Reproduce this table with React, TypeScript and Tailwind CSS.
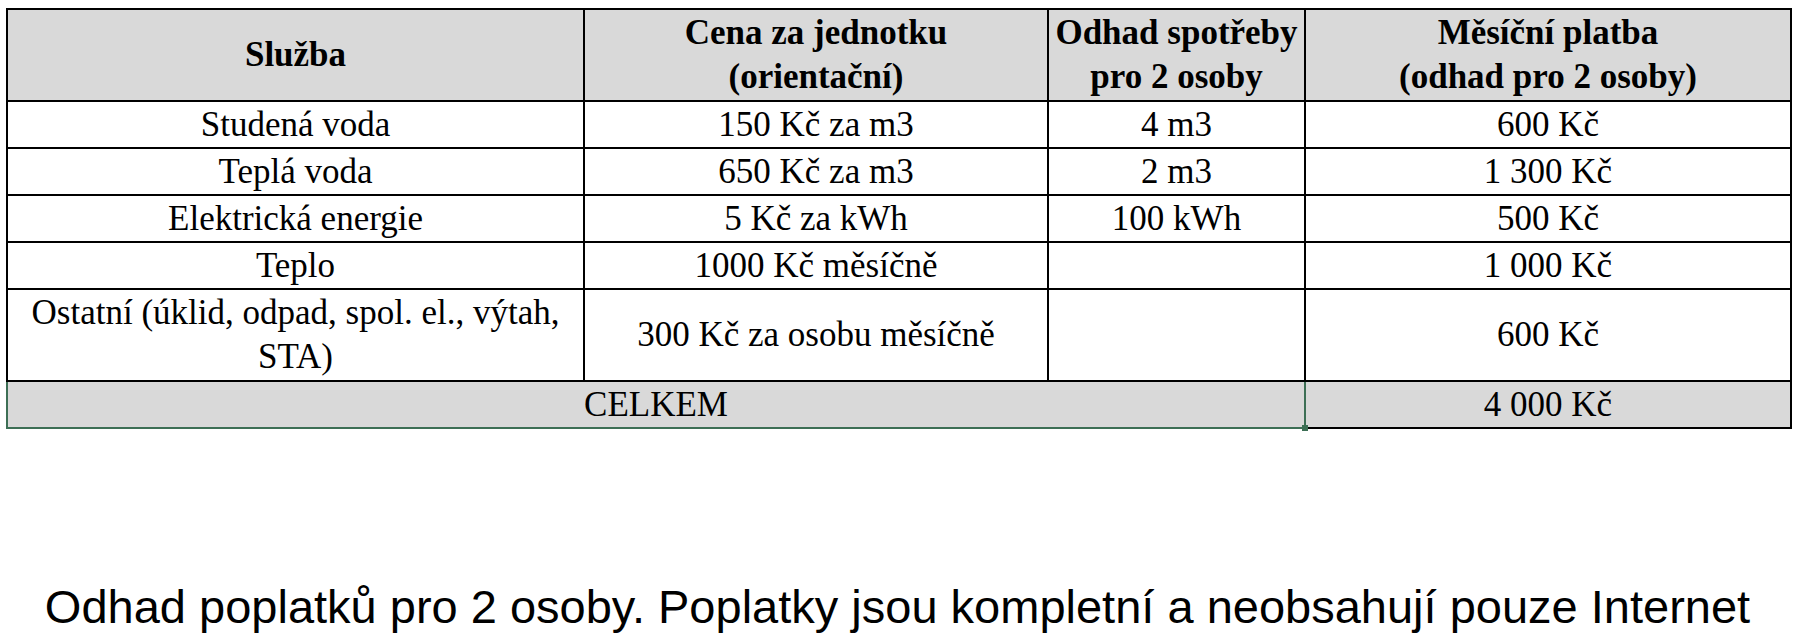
const ROWS = [
  { sluzba: ["Studená voda"], cena: "150 Kč za m3", odhad: "4 m3", platba: "600 Kč", h: "h-[47px]" },
  { sluzba: ["Teplá voda"], cena: "650 Kč za m3", odhad: "2 m3", platba: "1 300 Kč", h: "h-[47px]" },
  { sluzba: ["Elektrická energie"], cena: "5 Kč za kWh", odhad: "100 kWh", platba: "500 Kč", h: "h-[47px]" },
  { sluzba: ["Teplo"], cena: "1000 Kč měsíčně", odhad: "", platba: "1 000 Kč", h: "h-[47px]" },
  {
    sluzba: ["Ostatní (úklid, odpad, spol. el., výtah,", "STA)"],
    cena: "300 Kč za osobu měsíčně",
    odhad: "",
    platba: "600 Kč",
    h: "h-[92px]",
  },
];

const cell = "border-2 border-black text-center align-middle p-0";

export default function App() {
  return (
    <div className="w-[1795px] h-[640px] bg-white flex flex-col">
      <div className="pt-[8px] pl-[6px]">
        <table
          className="border-collapse table-fixed text-black text-[35px] leading-[40px]"
          style={{ fontFamily: '"Liberation Serif", "Times New Roman", serif' }}
        >
          <colgroup>
            <col className="w-[577px]" />
            <col className="w-[464px]" />
            <col className="w-[257px]" />
            <col className="w-[486px]" />
          </colgroup>
          <thead>
            <tr className="h-[92px] bg-[#d9d9d9] font-bold leading-[44px]">
              <th className={cell}>Služba</th>
              <th className={cell}>
                Cena za jednotku
                <br />
                (orientační)
              </th>
              <th className={cell}>
                Odhad spotřeby
                <br />
                pro 2 osoby
              </th>
              <th className={cell}>
                Měsíční platba
                <br />
                (odhad pro 2 osoby)
              </th>
            </tr>
          </thead>
          <tbody>
            {ROWS.map((r) => (
              <tr key={r.sluzba[0]} className={r.h}>
                <td className={cell + " leading-[44px]"}>
                  {r.sluzba.map((line, i) => (
                    <div key={i}>{line}</div>
                  ))}
                </td>
                <td className={cell}>{r.cena}</td>
                <td className={cell}>{r.odhad}</td>
                <td className={cell}>{r.platba}</td>
              </tr>
            ))}
            <tr className="h-[47px] bg-[#d9d9d9]">
              <td colSpan={3} className="relative border-2 border-[#3d6f55] text-center align-middle p-0">
                CELKEM
                <span className="absolute -right-[4px] -bottom-[4px] w-[6px] h-[6px] bg-[#3d6f55]" />
              </td>
              <td className={cell}>4 000 Kč</td>
            </tr>
          </tbody>
        </table>
      </div>
      <div className="flex-1 flex items-end justify-center pb-[7px]">
        <p
          className="text-[47px] leading-[52px] text-black"
          style={{ fontFamily: '"Liberation Sans", Arial, sans-serif' }}
        >
          Odhad poplatků pro 2 osoby. Poplatky jsou kompletní a neobsahují pouze Internet
        </p>
      </div>
    </div>
  );
}
